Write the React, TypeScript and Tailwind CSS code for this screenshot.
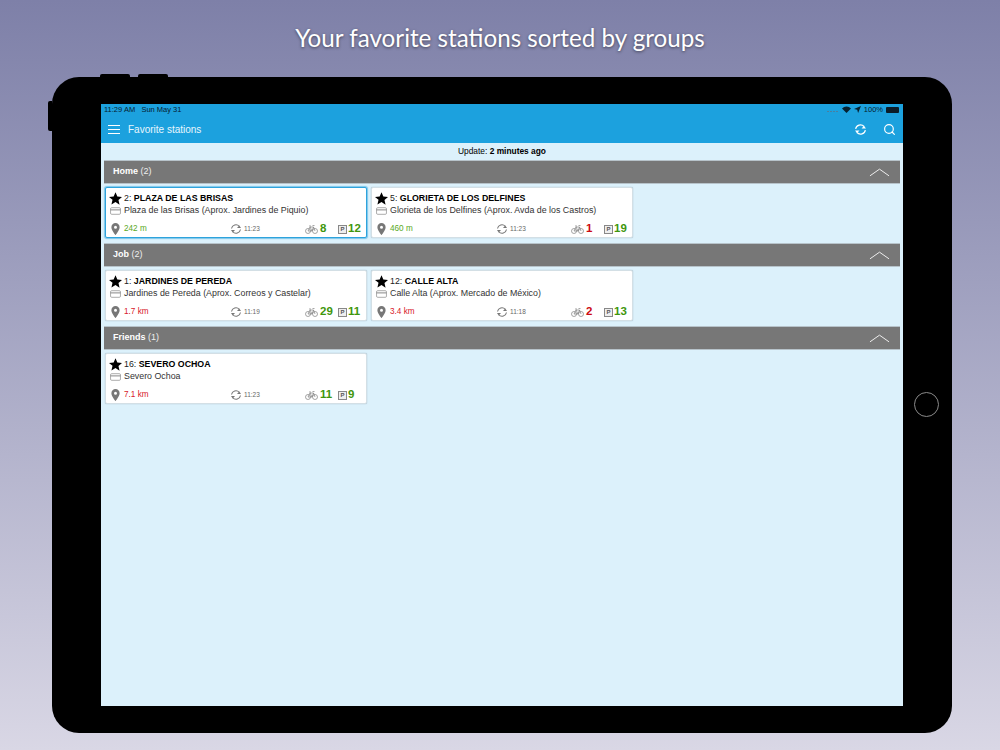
import { Search } from "lucide-react";

type Station = {
  id: number;
  name: string;
  address: string;
  distance: string;
  near: boolean;
  time: string;
  bikes: number;
  docks: number;
  selected?: boolean;
};

const groups: { title: string; stations: Station[] }[] = [
  {
    title: "Home",
    stations: [
      { id: 2, name: "PLAZA DE LAS BRISAS", address: "Plaza de las Brisas (Aprox. Jardines de Piquio)", distance: "242 m", near: true, time: "11:23", bikes: 8, docks: 12, selected: true },
      { id: 5, name: "GLORIETA DE LOS DELFINES", address: "Glorieta de los Delfines (Aprox. Avda de los Castros)", distance: "460 m", near: true, time: "11:23", bikes: 1, docks: 19 },
    ],
  },
  {
    title: "Job",
    stations: [
      { id: 1, name: "JARDINES DE PEREDA", address: "Jardines de Pereda (Aprox. Correos y Castelar)", distance: "1.7 km", near: false, time: "11:19", bikes: 29, docks: 11 },
      { id: 12, name: "CALLE ALTA", address: "Calle Alta (Aprox. Mercado de México)", distance: "3.4 km", near: false, time: "11:18", bikes: 2, docks: 13 },
    ],
  },
  {
    title: "Friends",
    stations: [
      { id: 16, name: "SEVERO OCHOA", address: "Severo Ochoa", distance: "7.1 km", near: false, time: "11:23", bikes: 11, docks: 9 },
    ],
  },
];

const SyncIcon = ({ className }: { className: string }) => (
  <svg viewBox="0 0 24 24" fill="none" stroke="currentColor" strokeWidth="2.2" className={className}>
    <path d="M3 11a9 9 0 0 1 15.500-4.500" />
    <path d="M21 13a9 9 0 0 1-15.500 4.500" />
    <path d="M22 10h-8l4.500-5z" fill="currentColor" stroke="none" />
    <path d="M2 14h8l-4.500 5z" fill="currentColor" stroke="none" />
  </svg>
);

const StarIcon = () => (
  <svg viewBox="0 0 24 24" className="w-[13px] h-[13px]" fill="black">
    <path d="M12 0.500l3.400 8 8.600 0.700-6.500 5.700 2 8.500L12 18.400 4.500 22.900l2-8.500L0 9.200l8.600-0.700z" />
  </svg>
);

const BikeIcon = () => (
  <svg viewBox="0 0 26 18" fill="none" stroke="#777" strokeWidth="1.300" className="w-[13px] h-[9px] shrink-0">
    <circle cx="6" cy="12" r="5" />
    <circle cx="20" cy="12" r="5" />
    <path d="M6 12l4-8h7l3 8M10 4l4 8H6M17 4l-3 8M8 2h4M15 1h4" />
  </svg>
);

const PinIcon = () => (
  <svg viewBox="0 0 12 16" className="w-[9px] h-[12px]">
    <path fillRule="evenodd" fill="#777" d="M6 0a5.500 5.500 0 0 0-5.500 5.500C.5 9.500 6 16 6 16s5.500-6.500 5.500-10.500A5.500 5.500 0 0 0 6 0zm0 3.500a2 2 0 1 1 0 4 2 2 0 0 1 0-4z" />
  </svg>
);

const CardIcon = () => (
  <svg viewBox="0 0 20 14" fill="none" stroke="#777" strokeWidth="1.100" className="w-[11px] h-[8px]">
    <rect x="1" y="1" width="18" height="12" rx="2" />
    <path d="M1 5h18" strokeWidth="1.600" />
  </svg>
);

const StationCard = ({ station }: { station: Station }) => {
  const isLow = (n: number) => n < 5;
  return (
    <div
      className={`w-[262px] h-[51px] bg-white rounded-[2px] pl-[3px] pt-[5px] border ${
        station.selected
          ? "border-[#2ea3dc] shadow-[0_0_1px_1px_rgba(46,163,220,0.55)]"
          : "border-[#d3dfe5] shadow-[0_0_1px_rgba(60,90,110,0.5)]"
      }`}
    >
      <div className="flex items-center h-[12px]">
        <div className="w-[15px] shrink-0 h-[13px] -mt-[2px]">
          <StarIcon />
        </div>
        <span className="text-[8.800px] text-[#222]">{station.id}:&nbsp;</span>
        <span className="text-[8.800px] font-bold text-black">{station.name}</span>
      </div>
      <div className="flex items-center h-[12px]">
        <div className="w-[15px] shrink-0 pl-[1px]">
          <CardIcon />
        </div>
        <span className="text-[8.850px] text-[#333]">{station.address}</span>
      </div>
      <div className="flex items-center h-[14px] mt-[5px]">
        <div className="w-[15px] shrink-0 pl-[2px]">
          <PinIcon />
        </div>
        <span className={`w-[106px] shrink-0 text-[8.200px] ${station.near ? "text-[#5aa81e]" : "text-[#d8202a]"}`}>
          {station.distance}
        </span>
        <SyncIcon className="w-[12px] h-[12px] shrink-0 text-[#777]" />
        <span className="ml-[2px] w-[61px] shrink-0 text-[6.500px] text-[#666]">{station.time}</span>
        <BikeIcon />
        <span className={`ml-[2px] w-[18px] shrink-0 text-[11.500px] font-bold ${isLow(station.bikes) ? "text-[#cc0a12]" : "text-[#3f960d]"}`}>
          {station.bikes}
        </span>
        <span className="w-[9px] h-[9px] shrink-0 border border-[#888] bg-[#eee] text-[6px] font-bold leading-[7px] text-center text-[#555]">P</span>
        <span className="ml-[1px] text-[11.500px] font-bold text-[#3f960d]">{station.docks}</span>
      </div>
    </div>
  );
};

export default function App() {
  return (
    <div className="w-[1000px] h-[750px] overflow-hidden bg-gradient-to-b from-[#7e80a8] to-[#d9d7e5] font-['Liberation_Sans',sans-serif]">
      <h1 className="h-[77px] pt-[22px] text-center text-[24.200px] leading-[32px] text-white font-['Lato',sans-serif] [text-shadow:0_1px_3px_rgba(0,0,0,0.5)]">
        Your favorite stations sorted by groups
      </h1>

      <div className="relative ml-[52px] w-[900px] h-[656px] bg-black rounded-[27px] pt-[27px] pl-[49px]">
        {/* hardware buttons */}
        <div className="absolute top-[-3px] left-[48px] w-[30px] h-[3px] bg-black rounded-t-[2px]" />
        <div className="absolute top-[-3px] left-[86px] w-[30px] h-[3px] bg-black rounded-t-[2px]" />
        <div className="absolute top-[24px] left-[-4px] w-[4px] h-[30px] bg-black rounded-l-[2px]" />
        <div className="absolute top-[315px] left-[862px] w-[25px] h-[25px] rounded-full border border-[#8a8a8a]" />

        <div className="w-[802px] h-[602px] bg-[#dcf1fb] flex flex-col">
          <div className="bg-[#1ca1de]">
            <div className="h-[11px] flex items-center justify-between pl-[3px] pr-[4px] text-[7.500px] text-[#06202f]">
              <span>11:29 AM&nbsp;&nbsp;&nbsp;Sun May 31</span>
              <div className="flex items-center gap-[3px]">
                <div className="flex gap-[1px] mr-[1px] mt-[3px]">
                  <div className="w-[2px] h-[1px] bg-[#4a7f9f]" />
                  <div className="w-[2px] h-[1px] bg-[#4a7f9f]" />
                  <div className="w-[2px] h-[1px] bg-[#4a7f9f]" />
                  <div className="w-[2px] h-[1px] bg-[#4a7f9f]" />
                </div>
                <svg viewBox="0 0 16 12" className="w-[9px] h-[7px]" fill="#06202f">
                  <path d="M8 12L0 4a11.500 11.500 0 0 1 16 0z" />
                </svg>
                <svg viewBox="0 0 12 12" className="w-[7px] h-[7px]" fill="#06202f">
                  <path d="M12 0L7 12 5.500 6.500 0 5z" />
                </svg>
                <span>100%</span>
                <div className="w-[13px] h-[6px] bg-[#0b1c28] rounded-[1px]" />
              </div>
            </div>
            <div className="h-[28px] flex items-center pl-[7px] pr-[7px] text-white">
              <div className="w-[12px] mr-[1px] flex flex-col gap-[3px] shrink-0">
                <div className="h-[1px] bg-white" />
                <div className="h-[1px] bg-white" />
                <div className="h-[1px] bg-white" />
              </div>
              <span className="ml-[7px] text-[10px] text-[#e8f6fd]">Favorite stations</span>
              <div className="ml-auto flex items-center gap-[16px]">
                <SyncIcon className="w-[13px] h-[13px]" />
                <Search className="w-[13px] h-[13px]" strokeWidth={2.2} />
              </div>
            </div>
          </div>

          <div className="h-[17px] flex items-center justify-center text-[8.400px] text-black">
            Update:&nbsp;<span className="font-bold">2 minutes ago</span>
          </div>

          <div className="px-[3px] flex flex-col gap-[5px]">
            {groups.map((group) => (
              <section key={group.title}>
                <div className="h-[24px] bg-[#777] flex items-center pl-[9px] pr-[10px] text-[9px] text-[#eee] border-y border-[#b7c3ca]">
                  <span className="font-bold text-white">{group.title}</span>
                  <span>&nbsp;({group.stations.length})</span>
                  <svg viewBox="0 0 22 9" fill="none" stroke="#f2f2f2" strokeWidth="1" className="ml-auto w-[21px] h-[9px]">
                    <path d="M1 8l10-7 10 7" />
                  </svg>
                </div>
                <div className="flex gap-[4px] pl-[1px] mt-[3px]">
                  {group.stations.map((station) => (
                    <StationCard key={station.id} station={station} />
                  ))}
                </div>
              </section>
            ))}
          </div>
        </div>
      </div>
    </div>
  );
}
